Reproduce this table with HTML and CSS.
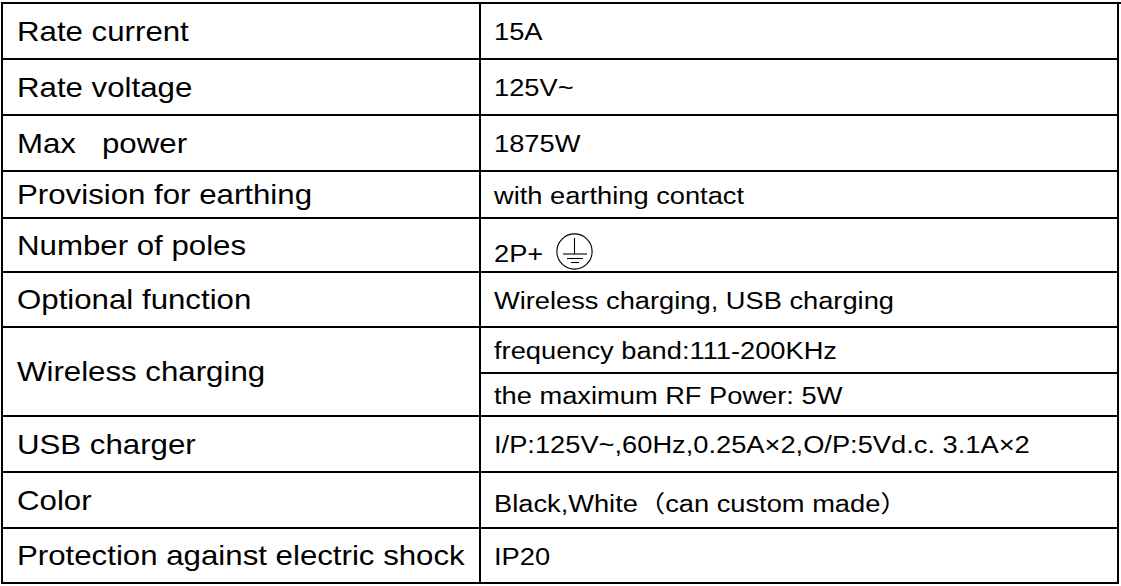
FILE: index.html
```html
<!DOCTYPE html>
<html lang="en">
<head>
<meta charset="utf-8">
<title>Specifications</title>
<link rel="stylesheet" href="styles.css">
</head>
<body>
<div class="spec">
  <div class="cell key r1"><span class="t">Rate current</span></div>
  <div class="cell val r1"><span class="t">15A</span></div>

  <div class="cell key r2"><span class="t">Rate voltage</span></div>
  <div class="cell val r2"><span class="t">125V~</span></div>

  <div class="cell key r3"><span class="t">Max&nbsp;&nbsp;&nbsp;power</span></div>
  <div class="cell val r3"><span class="t">1875W</span></div>

  <div class="cell key r4"><span class="t">Provision for earthing</span></div>
  <div class="cell val r4"><span class="t">with earthing contact</span></div>

  <div class="cell key r5"><span class="t">Number of poles</span></div>
  <div class="cell val r5 low"><span class="t">2P+</span>
    <svg class="earth" width="37" height="37" viewBox="0 0 37 37" aria-hidden="true">
      <circle cx="18.5" cy="18.5" r="17.6" fill="none" stroke="#000" stroke-width="1.1"/>
      <line x1="18.5" y1="5" x2="18.5" y2="21" stroke="#000" stroke-width="1.1"/>
      <line x1="7" y1="21" x2="31" y2="21" stroke="#000" stroke-width="1.1"/>
      <line x1="11" y1="25.5" x2="27" y2="25.5" stroke="#000" stroke-width="1.1"/>
      <line x1="15" y1="29.5" x2="23" y2="29.5" stroke="#000" stroke-width="1.1"/>
    </svg>
  </div>

  <div class="cell key r6"><span class="t">Optional function</span></div>
  <div class="cell val r6"><span class="t">Wireless charging, USB charging</span></div>

  <div class="cell key r7"><span class="t">Wireless charging</span></div>
  <div class="cell val r7a"><span class="t">frequency band:111-200KHz</span></div>
  <div class="cell val r7b"><span class="t">the maximum RF Power: 5W</span></div>

  <div class="cell key r8"><span class="t">USB charger</span></div>
  <div class="cell val r8"><span class="t">I/P:125V~,60Hz,0.25A×2,O/P:5Vd.c. 3.1A×2</span></div>

  <div class="cell key r9"><span class="t">Color</span></div>
  <div class="cell val r9"><span class="t">Black,White（can custom made）</span></div>

  <div class="cell key r10"><span class="t">Protection against electric shock</span></div>
  <div class="cell val r10"><span class="t">IP20</span></div>
</div>
</body>
</html>
```

FILE: styles.css
```css
html, body {
  margin: 0;
  padding: 0;
  background: #ffffff;
}

body {
  font-family: "Liberation Sans", Arial, "Noto Sans CJK SC", sans-serif;
  color: #000;
}

.spec {
  margin: 2px 0 0 1px;
  width: 1118px;
  display: grid;
  grid-template-columns: 478px 638px;
  grid-template-rows: 56px 56px 56px 47px 54px 55px 46px 43px 56px 56px 55px;
  border-top: 2px solid #000;
  border-left: 2px solid #000;
}

.cell {
  box-sizing: border-box;
  border-right: 2px solid #000;
  border-bottom: 2px solid #000;
  display: flex;
  align-items: center;
  white-space: nowrap;
  overflow: hidden;
}

.key {
  grid-column: 1;
  padding-left: 14px;
  padding-top: 1px;
  font-size: 28px;
}

.key .t {
  display: inline-block;
  transform: scaleX(1.115);
  transform-origin: left center;
}

.val {
  grid-column: 2;
  padding-left: 13px;
  padding-top: 3px;
  font-size: 23.5px;
}

.val .t {
  display: inline-block;
  transform: scaleX(1.16);
  transform-origin: left center;
}

.r7 {
  grid-row: 7 / span 2;
}

.low {
  align-items: flex-end;
  padding-top: 0;
  padding-bottom: 1px;
}

.low .t {
  margin-bottom: 2px;
}

.earth {
  display: block;
  margin-left: 20px;
}
```
